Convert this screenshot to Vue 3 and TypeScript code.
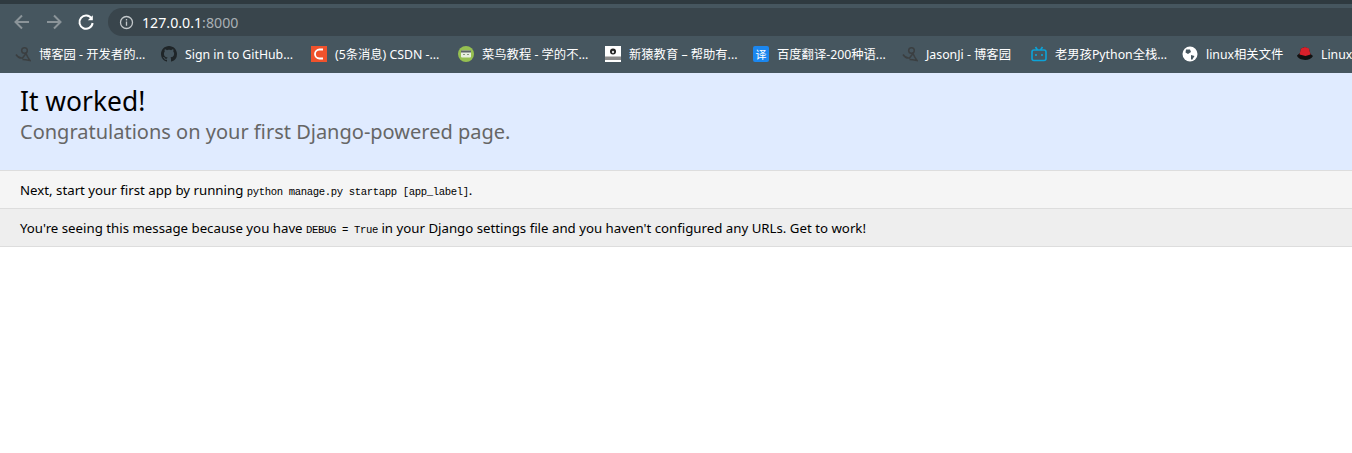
<script setup lang="ts">
interface Bookmark {
  label: string;
  icon: string;
  width: number;
}

const bookmarks: Bookmark[] = [
  { label: "博客园 - 开发者的...", icon: "cnblogs", width: 146 },
  { label: "Sign in to GitHub...", icon: "github", width: 150 },
  { label: "(5条消息) CSDN -...", icon: "csdn", width: 147 },
  { label: "菜鸟教程 - 学的不...", icon: "runoob", width: 147 },
  { label: "新猿教育 – 帮助有...", icon: "xinyuan", width: 148 },
  { label: "百度翻译-200种语...", icon: "baidu", width: 149 },
  { label: "JasonJi - 博客园", icon: "cnblogs", width: 129 },
  { label: "老男孩Python全栈...", icon: "bili", width: 151 },
  { label: "linux相关文件", icon: "globe", width: 115 },
  { label: "Linux", icon: "redhat", width: 80 },
];

const githubPath =
  "M8 0C3.58 0 0 3.58 0 8c0 3.54 2.29 6.53 5.47 7.59.4.07.55-.17.55-.38 0-.19-.01-.82-.01-1.49-2.01.37-2.53-.49-2.69-.94-.09-.23-.48-.94-.82-1.13-.28-.15-.68-.52-.01-.53.63-.01 1.08.58 1.23.82.72 1.21 1.87.87 2.33.66.07-.52.28-.87.51-1.07-1.78-.2-3.64-.89-3.64-3.95 0-.87.31-1.59.82-2.15-.08-.2-.36-1.02.08-2.12 0 0 .67-.21 2.2.82.64-.18 1.32-.27 2-.27.68 0 1.36.09 2 .27 1.53-1.04 2.2-.82 2.2-.82.44 1.1.16 1.92.08 2.12.51.56.82 1.27.82 2.15 0 3.07-1.87 3.75-3.65 3.95.29.25.54.73.54 1.48 0 1.07-.01 1.93-.01 2.2 0 .21.15.46.55.38A8.013 8.013 0 0016 8c0-4.42-3.58-8-8-8z";
</script>

<template>
  <div class="page">
    <header class="chrome">
      <div class="toolbar">
        <svg class="nav" width="18" height="18" viewBox="0 0 18 18" fill="none" stroke="#8b9499" stroke-width="2">
          <path d="M16 9H3M9 2.5 2.5 9 9 15.5" />
        </svg>
        <svg class="nav" width="18" height="18" viewBox="0 0 18 18" fill="none" stroke="#8b9499" stroke-width="2">
          <path d="M2 9h13M9 2.5 15.5 9 9 15.5" />
        </svg>
        <svg class="nav" width="18" height="18" viewBox="0 0 18 18" fill="none" stroke="#fff" stroke-width="2">
          <path d="M14.6 5.6A6.6 6.6 0 1 0 15.6 10" />
          <path d="M15.8 2.2v5h-5z" fill="#fff" stroke="none" />
        </svg>
        <div class="omnibox">
          <svg width="15" height="15" viewBox="0 0 15 15" fill="none" stroke="#c3c8cb" stroke-width="1.3">
            <circle cx="7.5" cy="7.5" r="6" />
            <path d="M7.5 6.6v4.2M7.5 4v1.5" />
          </svg>
          <span class="url">127.0.0.1<span class="port">:8000</span></span>
        </div>
      </div>
      <nav class="bookmarks">
        <div v-for="b in bookmarks" :key="b.label" class="bookmark" :style="{ width: b.width + 'px' }">
          <svg class="favicon" width="16" height="16" viewBox="0 0 16 16">
            <g v-if="b.icon === 'cnblogs'" fill="none" stroke="#3b3f41" stroke-width="1.5">
              <circle cx="9.5" cy="4.5" r="2.8" />
              <path d="M1 8.5c2 3 4 4 6.5 3.5L11 7.5c1 2.5 2.5 5 4 7-2.5-.5-5-1-7.500-1" />
            </g>
            <path v-else-if="b.icon === 'github'" :d="githubPath" fill="#1f2528" />
            <g v-else-if="b.icon === 'csdn'">
              <rect width="16" height="16" fill="#f0522c" />
              <path d="M12 3.5H8.500a4.500 4.500 0 0 0 0 9H12" fill="none" stroke="#fff" stroke-width="1.8" />
            </g>
            <g v-else-if="b.icon === 'runoob'">
              <circle cx="8" cy="8" r="8" fill="#96c051" />
              <rect x="3" y="4.5" width="10" height="7" rx="1" fill="#e8efe0" />
              <rect x="3" y="4.5" width="10" height="2" fill="#5d6468" />
              <path d="M5 8.5h2M9 8.5h2" stroke="#8a9a80" />
            </g>
            <g v-else-if="b.icon === 'xinyuan'">
              <rect width="16" height="16" fill="#fff" />
              <circle cx="8" cy="5.5" r="3" fill="#222" />
              <circle cx="8" cy="6" r="1.2" fill="#ddd" />
              <rect y="10.5" width="16" height="3.5" fill="#8a8a8a" />
            </g>
            <g v-else-if="b.icon === 'baidu'">
              <rect width="16" height="16" rx="2" fill="#1b87f0" />
              <text x="8" y="12.5" text-anchor="middle" class="fav-text">译</text>
            </g>
            <g v-else-if="b.icon === 'bili'" fill="none" stroke="#0da3d8" stroke-width="1.6">
              <rect x="1" y="4" width="14" height="10.500" rx="2" />
              <path d="M4.5 1 6.5 4M11.5 1 9.5 4" />
              <path d="M5 8v2M11 8v2" />
            </g>
            <g v-else-if="b.icon === 'globe'">
              <circle cx="8" cy="8" r="7.5" fill="#fff" />
              <path d="M4 3.5h4L9 6 6 8 3.5 6.5zM9 9l3.500 1L10 14l-1-1z" fill="#46565f" />
            </g>
            <g v-else>
              <path d="M0 9.500c1 5 13 6.500 16 .5l-2.500-2L12 3 8 1 4 2.500 3 7z" fill="#111" />
              <path d="M2.500 8.500 4 2.500 8 1l4 1.500 1.500 6-5 1.500z" fill="#d9202a" />
            </g>
          </svg>
          <span class="bookmark-label">{{ b.label }}</span>
        </div>
      </nav>
    </header>
    <main>
      <section class="summary">
        <h1>It worked!</h1>
        <h2>Congratulations on your first Django-powered page.</h2>
      </section>
      <section class="instructions">
        <p>Next, start your first app by running <code>python manage.py startapp [app_label]</code>.</p>
      </section>
      <section class="explanation">
        <p>You're seeing this message because you have <code>DEBUG = True</code> in your Django settings file and you haven't configured any URLs. Get to work!</p>
      </section>
    </main>
  </div>
</template>

<style scoped>
.page {
  width: 1352px;
  height: 453px;
  overflow: hidden;
  background: #fff;
  font-family: "Noto Sans", "Noto Sans CJK SC", sans-serif;
  color: #000;
}

.chrome {
  height: 73px;
  padding-top: 4px;
  box-sizing: border-box;
  background: #2f3a40;
}

.toolbar {
  height: 33px;
  display: flex;
  align-items: center;
  padding: 3px 0 0 13px;
  box-sizing: border-box;
  background: #46565f;
}

.nav {
  margin-right: 14px;
  flex: none;
}

.omnibox {
  flex: 1;
  height: 28px;
  margin-left: -1px;
  padding-left: 11px;
  display: flex;
  align-items: center;
  gap: 8px;
  border-radius: 14px 0 0 14px;
  background: #39454c;
}

.url {
  font-size: 14.2px;
  color: #fff;
}

.port {
  color: #a9b0b4;
}

.bookmarks {
  height: 36px;
  display: flex;
  align-items: center;
  padding: 0 0 2px 15px;
  box-sizing: border-box;
  background: #46565f;
}

.bookmark {
  flex: none;
  display: flex;
  align-items: center;
  gap: 8px;
  white-space: nowrap;
}

.favicon {
  flex: none;
}

.fav-text {
  font-size: 11px;
  fill: #fff;
}

.bookmark-label {
  font-size: 12.3px;
  color: #fff;
}

.summary {
  height: 98px;
  padding: 11px 20px 0;
  box-sizing: border-box;
  background: #e0ebff;
  border-bottom: 1px solid #ddd;
}

h1 {
  margin: 0;
  font-size: 26.4px;
  font-weight: 400;
  line-height: 35px;
}

h2 {
  margin: 0;
  font-size: 20px;
  font-weight: 400;
  line-height: 26px;
  color: #666;
}

.instructions,
.explanation {
  height: 38px;
  padding: 0 20px;
  box-sizing: border-box;
  display: flex;
  align-items: center;
  border-bottom: 1px solid #ddd;
}

.instructions {
  background: #f5f5f5;
}

.explanation {
  background: #eee;
}

p {
  margin: 0;
  font-size: 13.25px;
}

code {
  font-family: "Liberation Mono", monospace;
  font-size: 10.6px;
  letter-spacing: -0.36px;
}
</style>
